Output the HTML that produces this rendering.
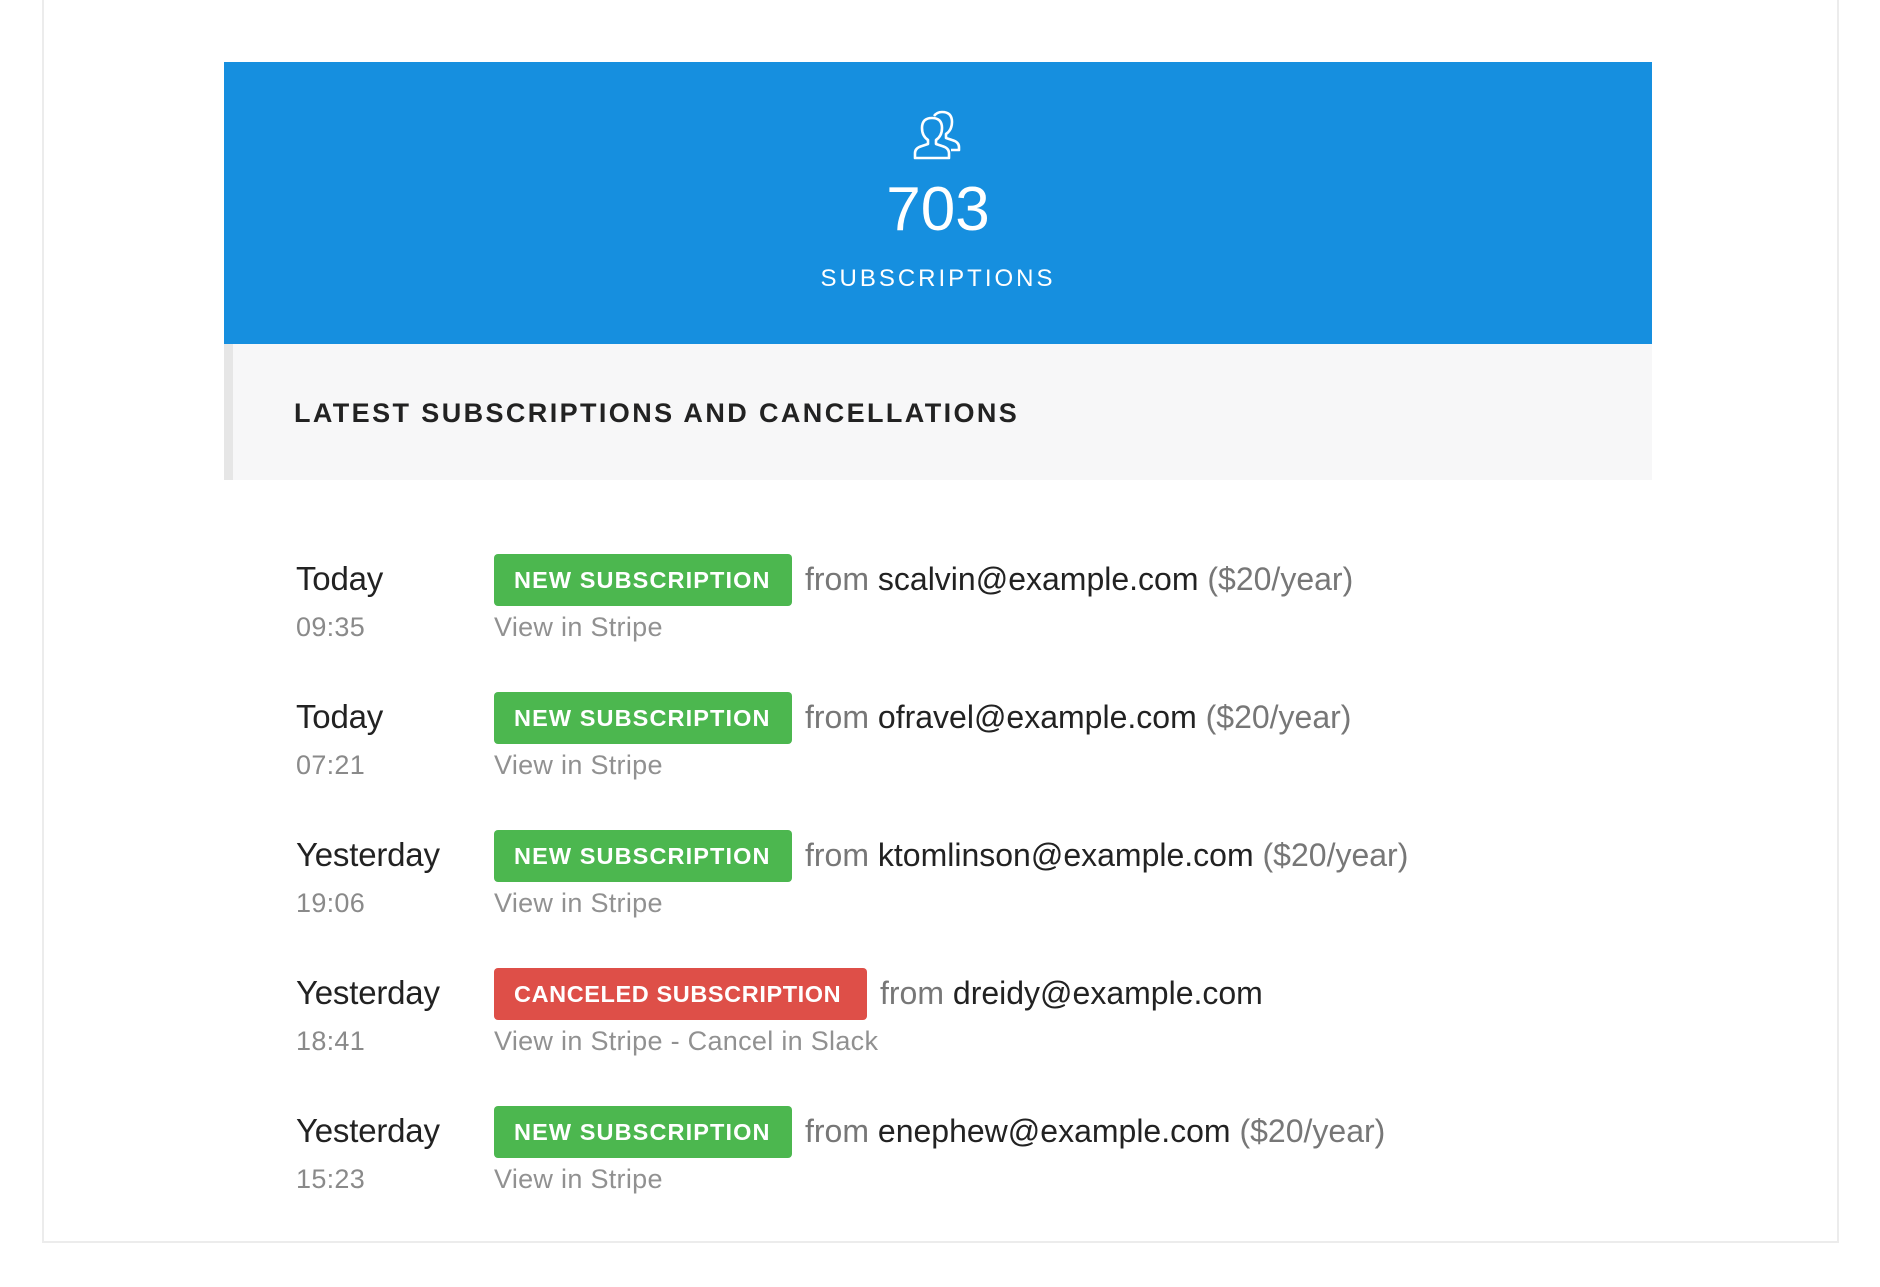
<!DOCTYPE html>
<html><head><meta charset="utf-8"><style>
*{margin:0;padding:0;box-sizing:border-box}
body{width:1880px;height:1287px;background:#fff;font-family:"Liberation Sans",sans-serif;position:relative;overflow:hidden}
.card{position:absolute;left:42px;top:-4px;width:1797px;height:1247px;border:2px solid #ececec;border-top:none}
.blue{position:absolute;left:224px;top:62px;width:1428px;height:282px;background:#168fdf;color:#fff;text-align:center}
.num{position:absolute;left:0;right:0;top:113px;font-size:62px;line-height:70px}
.subs{position:absolute;left:0;right:0;top:202px;font-size:24px;letter-spacing:3px;line-height:30px}
.gray{position:absolute;left:224px;top:344px;width:1428px;height:136px;background:#f7f7f8;border-left:9px solid #e6e6e6}
.gray h2{position:absolute;left:61px;top:52px;font-size:27px;font-weight:bold;letter-spacing:2.4px;color:#222;line-height:34px}
.row{position:absolute;left:0;width:1880px;height:130px}
.d{position:absolute;left:296px;top:2px;font-size:33px;color:#222;line-height:46px;letter-spacing:-0.2px}
.t{position:absolute;left:296px;top:56px;font-size:27px;color:#8a8a8a;line-height:34px;letter-spacing:0.3px}
.b{position:absolute;left:494px;top:0;height:52px;border-radius:4px;color:#fff;font-weight:bold;font-size:23.5px;line-height:52px;padding:0 20px;letter-spacing:1.1px;white-space:nowrap}
.g{background:#4cb74f;width:298px}
.r{background:#de4f48;width:373px;letter-spacing:0.6px}
.f{position:absolute;top:2px;font-size:32px;line-height:46px;color:#777;white-space:nowrap;letter-spacing:0px}
.f b{font-weight:normal;color:#222}
.v{position:absolute;left:494px;top:56px;font-size:27px;color:#919191;line-height:34px;letter-spacing:0.3px}
</style></head><body>
<div class="card"></div>
<div class="blue">
<svg style="position:absolute;left:688px;top:48px" width="52" height="52" viewBox="0 0 52 52" fill="none" stroke="#fff" stroke-width="2.6" stroke-linejoin="round">
<path d="M3 48 L3 43 Q3 38 10 36 L16 34 L16 30 Q10 26 10 18 Q10 8 20 8 Q30 8 30 18 Q30 26 24 30 L24 34 L30 36 Q37 38 37 43 L37 48 Z"/>
<path d="M22 6 Q25 2 30 2 Q40 2 40 12 Q40 20 34 24 L34 28 L40 30 Q47 32 47 37 L47 40 L39 40"/>
</svg>
<div class="num">703</div>
<div class="subs">SUBSCRIPTIONS</div>
</div>
<div class="gray"><h2>LATEST SUBSCRIPTIONS AND CANCELLATIONS</h2></div>

<div class="row" style="top:554px"><div class="d">Today</div><div class="t">09:35</div><div class="b g">NEW SUBSCRIPTION</div><div class="f" style="left:805px">from <b>scalvin@example.com</b> ($20/year)</div><div class="v">View in Stripe</div></div>
<div class="row" style="top:692px"><div class="d">Today</div><div class="t">07:21</div><div class="b g">NEW SUBSCRIPTION</div><div class="f" style="left:805px">from <b>ofravel@example.com</b> ($20/year)</div><div class="v">View in Stripe</div></div>
<div class="row" style="top:830px"><div class="d">Yesterday</div><div class="t">19:06</div><div class="b g">NEW SUBSCRIPTION</div><div class="f" style="left:805px">from <b>ktomlinson@example.com</b> ($20/year)</div><div class="v">View in Stripe</div></div>
<div class="row" style="top:968px"><div class="d">Yesterday</div><div class="t">18:41</div><div class="b r">CANCELED SUBSCRIPTION</div><div class="f" style="left:880px">from <b>dreidy@example.com</b></div><div class="v">View in Stripe - Cancel in Slack</div></div>
<div class="row" style="top:1106px"><div class="d">Yesterday</div><div class="t">15:23</div><div class="b g">NEW SUBSCRIPTION</div><div class="f" style="left:805px">from <b>enephew@example.com</b> ($20/year)</div><div class="v">View in Stripe</div></div>
</body></html>
